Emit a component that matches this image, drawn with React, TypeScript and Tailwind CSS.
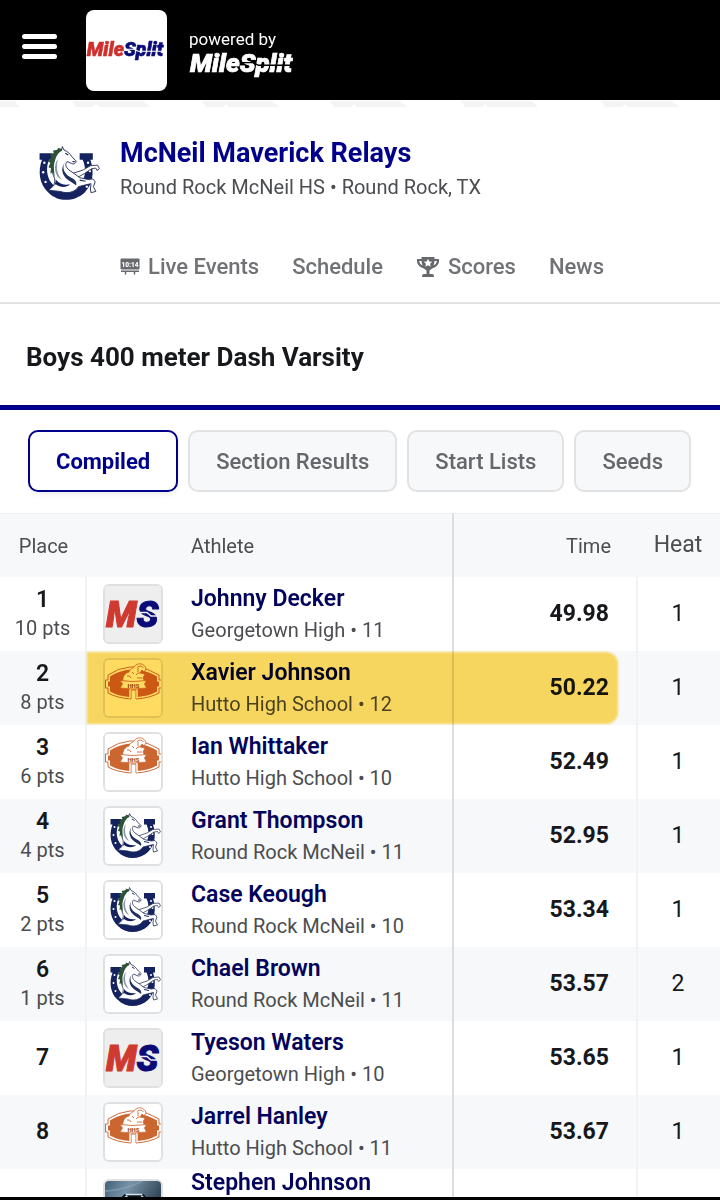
import { useState } from 'react';

type School = 'georgetown' | 'hutto' | 'mcneil';

const results: { place: number; pts?: string; name: string; school: School; team: string; time: string; heat: number; marked?: boolean }[] = [
  { place: 1, pts: '10 pts', name: 'Johnny Decker', school: 'georgetown', team: 'Georgetown High • 11', time: '49.98', heat: 1 },
  { place: 2, pts: '8 pts', name: 'Xavier Johnson', school: 'hutto', team: 'Hutto High School • 12', time: '50.22', heat: 1, marked: true },
  { place: 3, pts: '6 pts', name: 'Ian Whittaker', school: 'hutto', team: 'Hutto High School • 10', time: '52.49', heat: 1 },
  { place: 4, pts: '4 pts', name: 'Grant Thompson', school: 'mcneil', team: 'Round Rock McNeil • 11', time: '52.95', heat: 1 },
  { place: 5, pts: '2 pts', name: 'Case Keough', school: 'mcneil', team: 'Round Rock McNeil • 10', time: '53.34', heat: 1 },
  { place: 6, pts: '1 pts', name: 'Chael Brown', school: 'mcneil', team: 'Round Rock McNeil • 11', time: '53.57', heat: 2 },
  { place: 7, name: 'Tyeson Waters', school: 'georgetown', team: 'Georgetown High • 10', time: '53.65', heat: 1 },
  { place: 8, name: 'Jarrel Hanley', school: 'hutto', team: 'Hutto High School • 11', time: '53.67', heat: 1 },
];

const tabs = ['Compiled', 'Section Results', 'Start Lists', 'Seeds'];

function MileSplitLogo({ left, right, cut, className }: { left: string; right: string; cut: string; className: string }) {
  return (
    <svg viewBox="-1 -4 104 36" className={className} aria-hidden="true">
      <text x="0" y="22" fontFamily="Roboto, sans-serif" fontWeight="900" fontStyle="italic" fontSize="25" strokeWidth=".7">
        <tspan fill={left} stroke={left}>Mile</tspan>
        <tspan fill={right} stroke={right}>Split</tspan>
      </text>
      <path d="M49 13H61L66 15.500H101" stroke={cut} strokeWidth="1.300" fill="none" />
    </svg>
  );
}

function MsLogo() {
  return (
    <svg viewBox="2 2 56 56" className="size-full bg-[#eeeeef]" aria-hidden="true">
      <text x="3" y="43" fontFamily="Roboto, sans-serif" fontWeight="900" fontStyle="italic" fontSize="36" strokeWidth="1">
        <tspan fill="#cf3a30" stroke="#cf3a30">M</tspan>
        <tspan fill="#0b0b78" stroke="#0b0b78">S</tspan>
      </text>
      <path d="M33 28.500H44L48 32H58" stroke="#eeeeef" strokeWidth="1.600" fill="none" />
    </svg>
  );
}

function HuttoLogo() {
  return (
    <svg viewBox="2 2 56 56" className="size-full bg-white" aria-hidden="true">
      <path
        d="M5 17Q15 10 27 9H33Q45 10 56 17V22H58.500V30H56V35Q47 40 33 41V32H28V41Q14 40 5 35V30H2.500V22H5Z"
        fill="#fff" stroke="#cc6a3a" strokeWidth="1"
      />
      <path
        d="M7 18.500Q16 12.500 28 11.500H33Q44 12.500 54 18.500V23.500H56V28.500H54V33.500Q46 38 34.500 39V30H26.500V39Q15 38 7 33.500V28.500H5V23.500H7Z"
        fill="#cb6630"
      />
      <path d="M20 24C19 19 22 15 26 14C27 10 30 11 31 9C34 4 42 5 43 11L41 14L39 12L37 15L42 16L40 20L42 24Z" fill="#fff" stroke="#cb6630" strokeWidth=".8" />
      <path d="M34 9.500Q38 6.500 40.500 10M29 14L31 16M33 17Q35 14 37 15M34 20H39M24 18Q27 17 28 20M35 10V14" stroke="#cb6630" strokeWidth=".9" fill="none" />
      <path d="M17 22.500Q30 24.500 43.500 22.500L41.500 26L43.500 30Q30 32 17 30L19.500 26Z" fill="#fff" stroke="#cb6630" strokeWidth=".8" />
      <text x="30.500" y="29.500" textAnchor="middle" fontFamily="Roboto, sans-serif" fontWeight="900" fontSize="6" fill="#a8562f">HHS</text>
      <path d="M27 32V40.500M34 32V40.500" stroke="#fff" strokeWidth="1" />
    </svg>
  );
}

function MustangLogo() {
  return (
    <svg viewBox="2 2 56 56" className="size-full bg-white" aria-hidden="true">
      <path
        d="M7.500 13H18V18.500H15.500C12.500 25 13.500 33 17.500 38C23 45 38 45 43 37C46.500 31 46 24 43.500 18.500H41V13H52V18.500H50C53.500 29 52 39 45 46C36 54 23 54 15 46C7 39 6 28 9.500 18.500H7.500Z"
        fill="#14235f"
      />
      <g fill="#fff">
        <circle cx="11.500" cy="21" r="1" /><circle cx="10.500" cy="29" r="1" /><circle cx="12.500" cy="37" r="1" />
        <circle cx="48" cy="21" r="1" /><circle cx="49.500" cy="28" r="1" /><circle cx="47" cy="41" r="1" />
      </g>
      {/* far foreleg, then body */}
      <path d="M35 30L44 27L50 23.500L56 23L57.500 26L55.500 27.500L54.500 25.500L51 26L45 30L38 34Z" fill="#fff" stroke="#3a4260" strokeWidth=".8" strokeLinejoin="round" />
      <path
        d="M26.500 7.500L28 10.500C31 11.500 33 13.500 34.500 16L38 19.500C38 22 35.500 22.500 34 21.500L30.500 20C28.500 22 29.500 25 32 27C35 29 38 31 41 33.500L48 35L52 34.500L54 37L52.500 41L54.500 45L50.500 46L50 43L50.500 38.500L46 39.500L40 41C37 46 30 47 25 45L15 44C19 41 21 38 20 34C17 28 17 18 20 13C22 10 24 9.500 26 10Z"
        fill="#fff" stroke="#27325c" strokeWidth=".8" strokeLinejoin="round"
      />
      <path d="M26 9.500L22.500 8.500L23 10L18.500 11L19.500 12.500L16 15L17.500 16.500L14.500 20L16.500 21L15 25L17 25.500L16.500 30L18.500 29L20 33C20 28 18.500 24 20.500 19C21.500 15 23.500 12 26.500 11Z" fill="#2d5236" />
      <path d="M23 18C21 24 22 30 26 35C23.500 34 21 31 20.500 27C20 23 21 20 23 18Z" fill="#8b95ac" />
      <path d="M28.500 21C26 25 28 30 33 33C37 35 39 37 38 40C35 37 30 36 27.500 31C26 28 26 24 28.500 21Z" fill="#202e5e" />
      <path d="M21 35C24 39 29 40 33 39C30 42 25 42 21 39L17 43Q21 40 21 35Z" fill="#14235f" />
      <path d="M29 13L31.500 14.500M35 20L37 20M41 35.500L46 36.500" stroke="#202e5e" strokeWidth="1" />
    </svg>
  );
}

function SchoolLogo({ school }: { school: School }) {
  if (school === 'georgetown') return <MsLogo />;
  if (school === 'hutto') return <HuttoLogo />;
  return <MustangLogo />;
}

function ScoreboardIcon() {
  return (
    <svg viewBox="0 0 20 17" className="h-[17px] w-5" aria-hidden="true">
      <rect x=".5" y=".5" width="19" height="11" rx="1" fill="#67696c" />
      <text x="10" y="8.500" textAnchor="middle" fontFamily="Roboto, sans-serif" fontWeight="900" fontSize="6.500" fill="#fff">10:14</text>
      <path d="M1 13.200H19M5.500 13V16.500M14.500 13V16.500" stroke="#67696c" strokeWidth="1.500" />
    </svg>
  );
}

function TrophyIcon() {
  return (
    <svg viewBox="0 0 24 22" className="h-[22px] w-6" aria-hidden="true">
      <path d="M5.500 1H18.500V3H23V5C23 9 19.500 11.500 16 12.500C15 13.500 14 14 13.500 14.500V18H16Q18 18 18 21H6Q6 18 8 18H10.500V14.500C10 14 9 13.500 8 12.500C4.500 11.500 1 9 1 5V3H5.500Z" fill="#67696c" />
      <path d="M3 5H5.500Q5.700 7.500 6.500 9.500Q3.500 8 3 5M21 5H18.500Q18.300 7.500 17.500 9.500Q20.500 8 21 5" fill="#fff" />
      <path d="M12 2.700L13.300 5.400L16.200 5.800L14.100 7.800L14.600 10.700L12 9.300L9.400 10.700L9.900 7.800L7.800 5.800L10.700 5.400Z" fill="#fff" />
    </svg>
  );
}

function BusPhoto() {
  return (
    <svg viewBox="0 0 60 60" className="size-full" aria-hidden="true">
      <defs>
        <linearGradient id="sky" x1="0" y1="0" x2="1" y2="0.6">
          <stop offset="0" stopColor="#3f6079" />
          <stop offset=".35" stopColor="#7893a8" />
          <stop offset="1" stopColor="#1b2b3d" />
        </linearGradient>
      </defs>
      <rect width="60" height="60" fill="url(#sky)" />
      <path d="M0 11Q24 9 40 0" stroke="#88a3b6" strokeWidth="2" fill="none" opacity=".6" />
      <path d="M17 60V18L21 14H41L45 18V60Z" fill="#101820" />
      <path d="M22 14.500H40M19 19L24 16M39 16L43 19" stroke="#d4e1ea" strokeWidth="1.500" />
    </svg>
  );
}

export default function App() {
  const [tab, setTab] = useState('Compiled');

  return (
    <div className="h-screen overflow-hidden border-b-3 border-black bg-white font-[Roboto,sans-serif] text-[#16181b]">
      <header className="flex h-[100px] items-center bg-black pl-[22px] text-white">
        <button aria-label="Menu" className="-mt-2 flex w-[35px] flex-col gap-[5px]">
          <span className="h-[5px] rounded-full bg-white" />
          <span className="h-[5px] rounded-full bg-white" />
          <span className="h-[5px] rounded-full bg-white" />
        </button>
        <a href="#" aria-label="MileSplit" className="ml-[29px] flex size-[81px] items-center justify-center rounded-lg bg-white">
          <MileSplitLogo left="#cf2f2b" right="#0b0b78" cut="#fff" className="w-[81px]" />
        </a>
        <div className="ml-[22px] pt-2">
          <p className="text-[17px] leading-5">powered by</p>
          <MileSplitLogo left="#fff" right="#fff" cut="#000" className="-my-1 w-[108px]" />
        </div>
      </header>

      {/* lower edge of the faint sponsor strip */}
      <svg className="block h-[7px] w-full" aria-hidden="true">
        <path
          d="M0 1H15L19 7H0ZM72 1H143L150 7H99L96 4L93 7H76ZM202 1H272L279 7H229L226 4L223 7H206ZM330 1H400L407 7H357L354 4L351 7H334ZM461 1H531L538 7H488L485 4L482 7H465ZM601 1H672L679 7H628L625 4L622 7H605Z"
          fill="#f4f4f4"
        />
      </svg>

      <div className="flex items-center pt-[30px] pl-[33px]">
        <div className="size-[67px]">
          <MustangLogo />
        </div>
        <div className="ml-5 pb-1">
          <h1 className="text-[27px] leading-8 font-bold text-[#00008b]">McNeil Maverick Relays</h1>
          <p className="text-xl leading-9 text-[#4b4d50]">Round Rock McNeil HS • Round Rock, TX</p>
        </div>
      </div>

      <nav className="flex h-[95px] items-center gap-[33px] border-b-2 border-[#e1e2e4] pt-[22px] pl-[120px] text-[22px] font-medium text-[#707275]">
        <a href="#" className="flex items-center gap-2">
          <ScoreboardIcon />
          Live Events
        </a>
        <a href="#">Schedule</a>
        <a href="#" className="flex items-center gap-2">
          <TrophyIcon />
          Scores
        </a>
        <a href="#">News</a>
      </nav>

      <h2 className="border-b-5 border-[#00008b] px-[26px] pt-[35px] pb-[29px] text-[26px] leading-[37px] font-bold">Boys 400 meter Dash Varsity</h2>

      <div className="flex gap-2.5 px-7 pt-5 pb-[21px]">
        {tabs.map((t) => (
          <button
            key={t}
            onClick={() => setTab(t)}
            className={
              t === tab
                ? 'h-[62px] rounded-[10px] border-2 border-[#00008b] bg-white px-[26px] text-[22px] font-bold text-[#00008b] shadow-md shadow-black/5'
                : 'h-[62px] rounded-[10px] border-2 border-[#e1e2e4] bg-[#f7f8fa] px-[26px] text-[22px] font-medium text-[#65676b]'
            }
          >
            {t}
          </button>
        ))}
      </div>

      <table className="w-full table-fixed border-separate border-spacing-0">
        <thead>
          <tr className="h-16 bg-[#f7f8fa] text-xl text-[#4b4d50]">
            <th className="w-[87px] border-t border-[#eff0f3] p-0 font-normal">Place</th>
            <th className="border-t border-r-2 border-t-[#eff0f3] border-r-[#dcdde0] p-0 pl-[104px] text-left font-normal">Athlete</th>
            <th className="w-[184px] border-t border-[#eff0f3] p-0 pr-[27px] text-right font-normal">Time</th>
            <th className="w-[82px] border-t border-[#eff0f3] p-0 pr-0.5 text-[23px] font-normal">Heat</th>
          </tr>
        </thead>
        <tbody>
          {results.map((r) => (
            <tr key={r.place} className="relative h-[74px] bg-white even:bg-[#f7f8fa]">
              <td className="border-r-2 border-[#f1f2f5] p-0 text-center">
                <p className="text-[23px] leading-7 font-semibold">{r.place}</p>
                {r.pts && <p className="text-xl leading-7 text-[#4b4d50]">{r.pts}</p>}
              </td>
              <td className="border-r-2 border-[#dcdde0] p-0 pl-4">
                <div className="flex items-center">
                  <div className="size-[60px] shrink-0 overflow-hidden rounded-md border-2 border-[#dfe0e2]">
                    <SchoolLogo school={r.school} />
                  </div>
                  <div className="ml-7">
                    <a href="#" className="block text-[23px] leading-8 font-semibold text-[#03035c]">{r.name}</a>
                    <p className="text-xl leading-[30px] text-[#4b4d50]">{r.team}</p>
                  </div>
                </div>
              </td>
              <td className="border-r-2 border-[#f1f2f5] p-0 pr-[27px] text-right text-[23px] font-bold">{r.time}</td>
              <td className="p-0 pr-0.5 text-center text-[23px]">
                {r.heat}
                {r.marked && (
                  <span className="pointer-events-none absolute inset-y-px right-[102px] left-[87px] rounded-r-xl bg-[#ffdc61] mix-blend-multiply blur-[1px]" />
                )}
              </td>
            </tr>
          ))}
          <tr className="bg-white align-top">
            <td className="border-r-2 border-[#f1f2f5] p-0" />
            <td className="border-r-2 border-[#dcdde0] p-0 pl-4">
              <div className="flex items-start">
                <div className="mt-2.5 size-[60px] shrink-0 overflow-hidden rounded-md border-2 border-[#dfe0e2]">
                  <BusPhoto />
                </div>
                <a href="#" className="ml-7 text-[23px] leading-7 font-semibold text-[#03035c]">Stephen Johnson</a>
              </div>
            </td>
            <td className="border-r-2 border-[#f1f2f5] p-0" />
            <td className="p-0" />
          </tr>
        </tbody>
      </table>
    </div>
  );
}
